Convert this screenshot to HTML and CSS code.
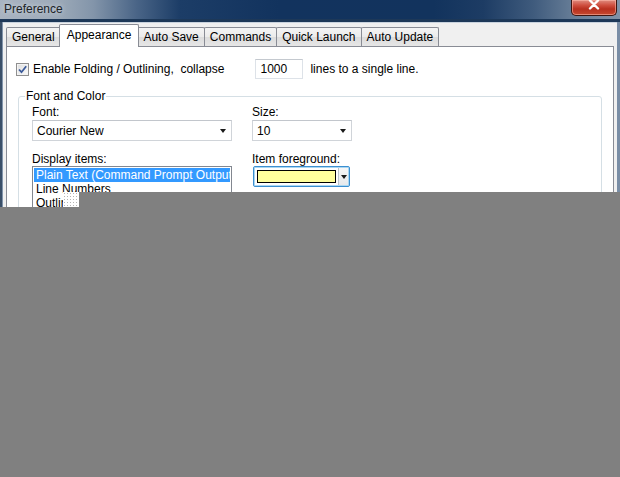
FILE: index.html
```html
<!DOCTYPE html>
<html>
<head>
<meta charset="utf-8">
<title>Preference</title>
<link rel="stylesheet" href="styles.css">
</head>
<body>
<div class="screen">
  <div class="window">
    <div class="titlebar">
      <span class="title">Preference</span>
      <div class="close">
        <svg width="12" height="10" viewBox="0 0 12 10"><path d="M2 0.5 L10 8.5 M10 0.5 L2 8.5" stroke="#fff" stroke-width="2.4" stroke-linecap="round"/></svg>
      </div>
    </div>
    <div class="body">
      <div class="tabs">
        <div class="tab">General</div>
        <div class="tab selected">Appearance</div>
        <div class="tab">Auto Save</div>
        <div class="tab">Commands</div>
        <div class="tab">Quick Launch</div>
        <div class="tab">Auto Update</div>
      </div>
      <div class="panel">
        <div class="fold-row">
          <span class="checkbox">
            <svg width="11" height="11" viewBox="0 0 11 11"><path d="M2 5.5 L4.5 8.2 L9.2 2.2" fill="none" stroke="#3b5a9a" stroke-width="1.8"/></svg>
          </span>
          <span class="fold-label">Enable Folding / Outlining,&nbsp; collapse</span>
          <span class="textbox">1000</span>
          <span class="fold-tail">lines to a single line.</span>
        </div>
        <fieldset class="group">
          <legend>Font and Color</legend>
          <div class="group-grid">
            <div class="col left">
              <div class="label">Font:</div>
              <div class="combo"><span>Courier New</span><i class="arrow"></i></div>
              <div class="label spaced">Display items:</div>
              <div class="listbox">
                <div class="item selected">Plain Text (Command Prompt Output)</div>
                <div class="item">Line Numbers</div>
                <div class="item">Outline</div>
              </div>
            </div>
            <div class="col right">
              <div class="label">Size:</div>
              <div class="combo size"><span>10</span><i class="arrow"></i></div>
              <div class="label spaced">Item foreground:</div>
              <div class="color-combo">
                <span class="swatch"></span>
                <span class="color-btn"><i class="arrow"></i></span>
              </div>
            </div>
          </div>
        </fieldset>
      </div>
    </div>
  </div>
  <div class="repaint"></div>
  <div class="noise"></div>
</div>
</body>
</html>
```
FILE: styles.css
```css
* { box-sizing: border-box; }
html, body { margin: 0; padding: 0; }
body {
  font-family: "Liberation Sans", Arial, sans-serif;
  font-size: 12px;
  color: #000;
  background: #808080;
}
.screen {
  position: relative;
  width: 620px;
  height: 477px;
  overflow: hidden;
  background: #808080;
}
.window {
  height: 207px;
  overflow: hidden;
  display: flex;
  flex-direction: column;
  background: linear-gradient(90deg, #3a4f68 0, #3a4f68 2px, #8194ab 2px, #8194ab 3px, transparent 3px),
              linear-gradient(270deg, #7a8ea6 0, #7a8ea6 3px, #34485f 3px, #34485f 4px, #7a8ea6 4px);
}
.titlebar {
  height: 22px;
  flex: none;
  display: flex;
  align-items: flex-start;
  border-bottom: 3px solid #1d3858;
  background: linear-gradient(90deg, #a9b4c1 0, #9eabb9 9%, #8395aa 15%, #4a6587 22%, #1c3d67 29%, #12335e 45%, #12335d 70%, #1d3c64 78%, #3f5b7d 86%, #6a8099 93%, #7f92a8 100%);
}
.title {
  padding: 2px 0 0 4px;
  line-height: 14px;
  color: #202428;
  text-shadow: 0 0 5px rgba(230, 236, 242, 0.8);
}
.close {
  margin-left: auto;
  margin-right: 3px;
  width: 46px;
  height: 16px;
  border: 1px solid #3d1510;
  border-top: none;
  border-radius: 0 0 5px 5px;
  background: linear-gradient(#e08c80 0, #cf4f3f 35%, #b8301f 60%, #c5492f 100%);
  box-shadow: inset 0 0 0 1px rgba(255, 190, 175, 0.55);
  display: flex;
  justify-content: center;
  align-items: flex-start;
}
.body {
  flex: 1;
  margin: 0 3px;
  padding: 0 3px;
  background: #f0f0f0;
  border-top: 1px solid #c9d3de;
  display: flex;
  flex-direction: column;
}
.tabs {
  height: 23px;
  flex: none;
  display: flex;
  align-items: flex-end;
  padding-left: 0;
}
.tab {
  height: 19px;
  padding: 0 5px;
  line-height: 19px;
  border: 1px solid #898c95;
  border-bottom: none;
  border-radius: 2px 2px 0 0;
  background: linear-gradient(#f4f4f4, #ebebeb 50%, #dcdcdc 51%, #e6e6e6);
  white-space: nowrap;
}
.tab + .tab { margin-left: -1px; }
.tab.selected {
  position: relative;
  z-index: 1;
  height: 23px;
  margin: 0 -2px -1px -2px;
  padding: 0 7px;
  line-height: 20px;
  background: #fff;
}
.tab.selected + .tab { margin-left: 0; }
.panel {
  flex: 1;
  background: #fff;
  border: 1px solid #898c95;
  padding: 0 11px 0 0;
}
.fold-row {
  margin-top: 11px;
  height: 22px;
  display: flex;
  align-items: center;
  padding-left: 9px;
}
.checkbox {
  width: 13px;
  height: 13px;
  border: 1px solid #8f8f8f;
  background: linear-gradient(135deg, #dedede, #fafafa);
  display: flex;
  align-items: center;
  justify-content: center;
  box-shadow: inset 0 0 0 1px #f4f4f4;
}
.fold-label { margin-left: 4px; white-space: nowrap; }
.textbox {
  margin-left: 31px;
  width: 48px;
  height: 20px;
  border: 1px solid #dde2e8;
  border-top-color: #c4c9cf;
  padding-left: 4px;
  line-height: 18px;
}
.fold-tail { margin-left: 7px; }
.group {
  margin: 9px 0 0 11px;
  padding: 0 0 0 6px;
  min-width: 0;
  border: 1px solid #d5dfe5;
  border-radius: 3px;
  height: 200px;
}
.group legend {
  padding: 0 1px;
  line-height: 14px;
}
.group-grid {
  display: flex;
  gap: 20px;
  padding: 2px 0 0 7px;
}
.col { display: flex; flex-direction: column; }
.col.left { width: 200px; }
.label { line-height: 14px; white-space: nowrap; }
.label.spaced { margin-top: 11px; }
.combo {
  margin-top: 1px;
  height: 21px;
  border: 1px solid #d0d4d9;
  border-top-color: #c2c6cc;
  background: #fff;
  display: flex;
  align-items: center;
  padding: 0 0 0 4px;
}
.combo span { flex: 1; }
.combo .arrow { margin-right: 5px; }
.combo.size { width: 100px; }
.arrow {
  display: block;
  width: 0;
  height: 0;
  border-left: 3.5px solid transparent;
  border-right: 3.5px solid transparent;
  border-top: 4px solid #1a1a1a;
}
.listbox {
  height: 60px;
  border: 1px solid #828790;
  padding: 1px;
  overflow: hidden;
}
.item {
  line-height: 14px;
  padding-left: 2px;
  white-space: nowrap;
  overflow: hidden;
}
.item.selected { background: #3399ff; color: #fff; }
.color-combo {
  margin-left: 1px;
  width: 97px;
  height: 21px;
  border: 1px solid #3c8fd0;
  border-radius: 2px;
  box-shadow: inset 0 0 0 1px #a9d7f3;
  background: #fff;
  display: flex;
  align-items: center;
  padding: 0 1px 0 3px;
}
.swatch {
  width: 79px;
  height: 13px;
  border: 1px solid #000;
  background: #ffff9c;
}
.color-btn {
  margin-left: 2px;
  flex: 1;
  height: 17px;
  border-left: 1px solid #b9c2cb;
  background: linear-gradient(#f7f7f7, #e6e9ec);
  display: flex;
  align-items: center;
  justify-content: center;
}
.repaint {
  position: absolute;
  left: 79px;
  top: 192px;
  right: 0;
  height: 16px;
  background: #808080;
}
.noise {
  position: absolute;
  left: 63px;
  top: 192px;
  width: 16px;
  height: 15px;
  background-color: #fff;
  background-image: radial-gradient(circle, #b4b4b4 0.7px, transparent 1px);
  background-size: 3px 3px;
}
```
